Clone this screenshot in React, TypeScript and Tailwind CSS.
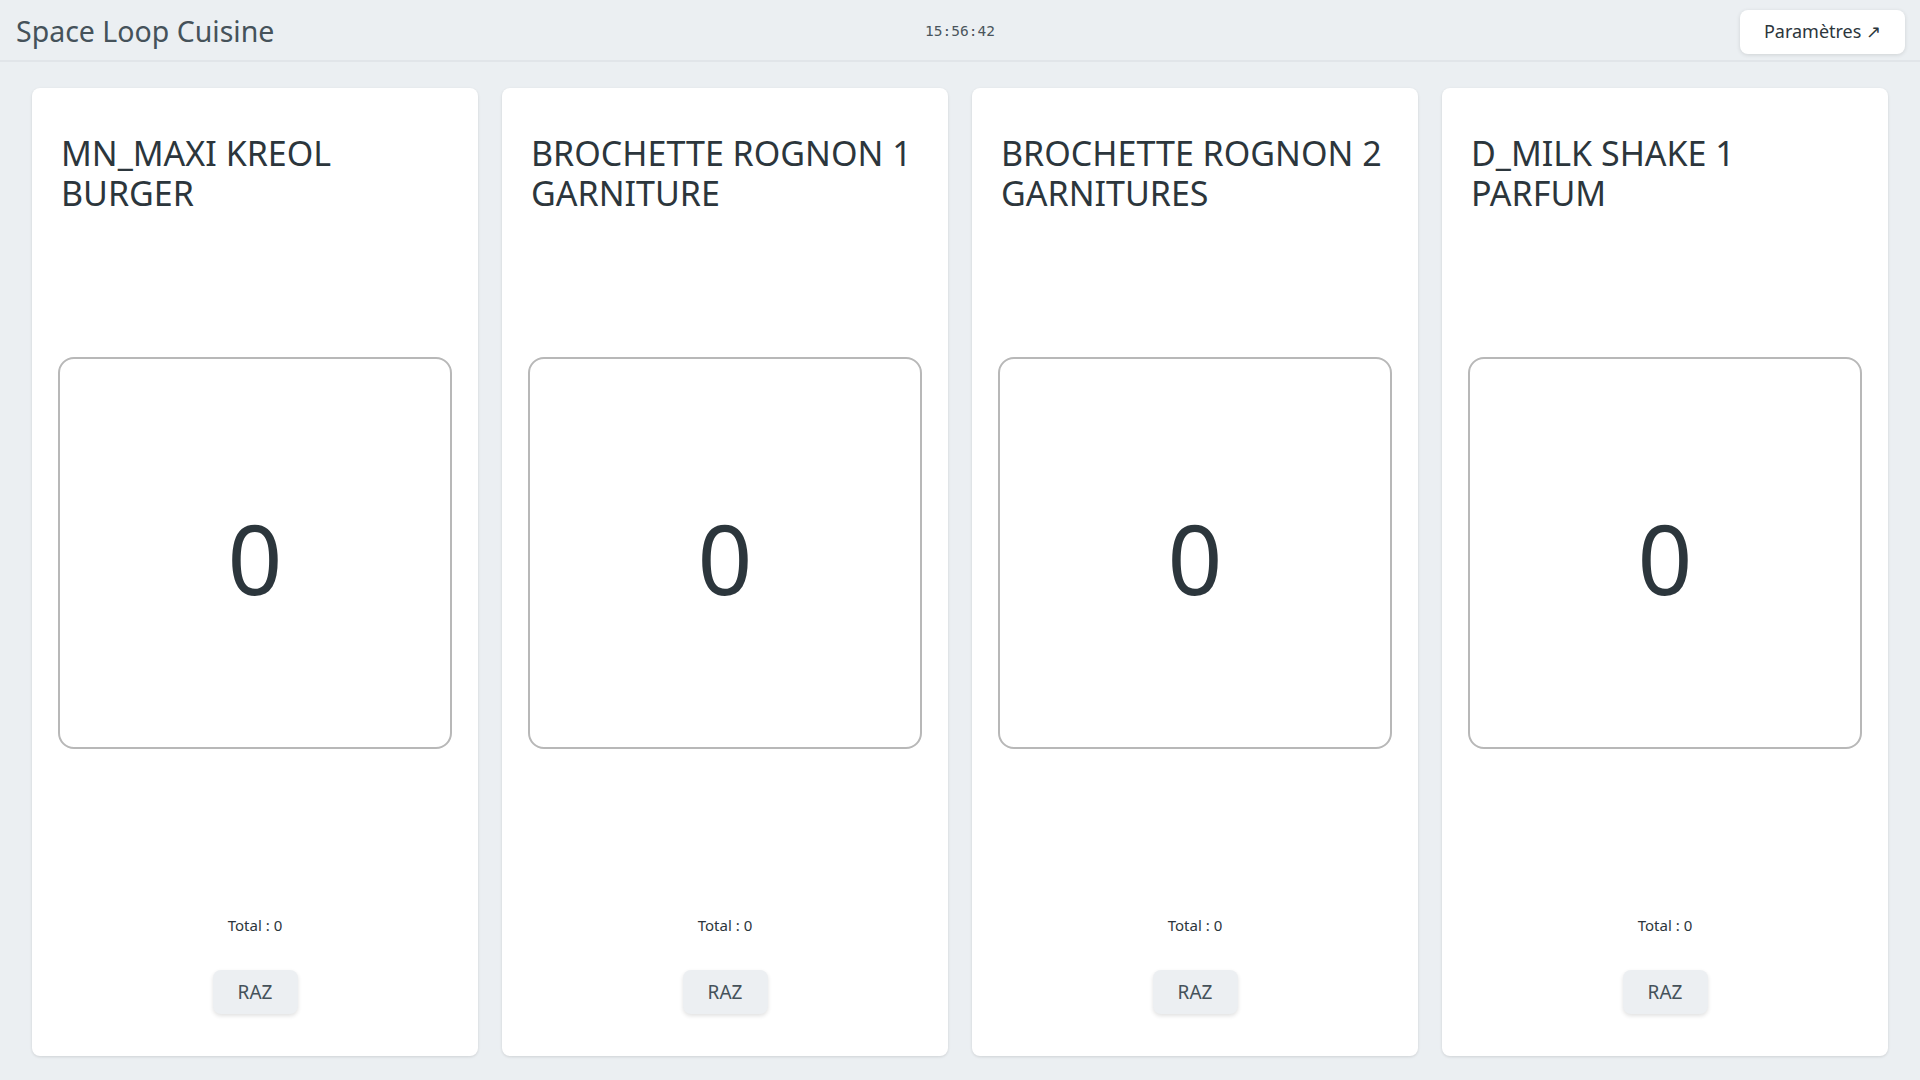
import React from "react";

const items = [
  { name: "MN_MAXI KREOL BURGER", count: 0, total: 0 },
  { name: "BROCHETTE ROGNON 1 GARNITURE", count: 0, total: 0 },
  { name: "BROCHETTE ROGNON 2 GARNITURES", count: 0, total: 0 },
  { name: "D_MILK SHAKE 1 PARFUM", count: 0, total: 0 },
];

function ItemCard({ name, count, total }: { name: string; count: number; total: number }) {
  return (
    <div className="flex flex-col bg-white rounded-lg shadow-[0_1px_3px_rgba(0,0,0,0.12)] pt-[45px] pb-[42px] px-[26px]">
      {/* Titre du produit */}
      <h2 className="h-[80px] pl-[3px] pr-2 text-[34px] leading-[40px] text-[#2c363c] uppercase">
        {name}
      </h2>

      {/* Compteur */}
      <div className="mt-[144px] h-[392px] flex items-center justify-center rounded-2xl border-2 border-[#b8b8b8]">
        <span className="pt-[10px] text-[96px] leading-none text-[#2c363c]">{count}</span>
      </div>

      <div className="flex-1" />

      <div className="flex flex-col items-center">
        <p className="text-[15px] leading-5 text-[#2c363c]">Total : {total}</p>
        <button className="mt-[35px] h-[44px] w-[85px] rounded-lg bg-[#eceff2] text-[19px] text-[#45525a] shadow-[0_2px_4px_rgba(0,0,0,0.12)]">
          RAZ
        </button>
      </div>
    </div>
  );
}

export default function App() {
  return (
    <div
      className="h-screen w-full flex flex-col bg-[#ebeff2]"
      style={{ fontFamily: '"Noto Sans", "Open Sans", sans-serif' }}
    >
      {/* Barre du haut */}
      <header className="h-[62px] shrink-0 grid grid-cols-3 items-center px-4 pt-[3px] border-b-2 border-[#e1e5e9]">
        <h1 className="text-[28.5px] text-[#45525a]">Space Loop Cuisine</h1>
        <div className="text-center text-[14.5px] text-[#4a555c]" style={{ fontFamily: '"DejaVu Sans Mono", "Liberation Mono", monospace' }}>
          15:56:42
        </div>
        <div className="flex justify-end">
          <button className="h-[44px] w-[165px] -mr-[1px] rounded-lg bg-white text-[18px] text-[#2c363c] shadow-[0_1px_4px_rgba(0,0,0,0.12)]">
            Paramètres ↗
          </button>
        </div>
      </header>

      <main className="flex-1 grid grid-cols-4 gap-6 px-8 pt-[26px] pb-[24px]">
        {items.map((it) => (
          <ItemCard key={it.name} {...it} />
        ))}
      </main>
    </div>
  );
}
